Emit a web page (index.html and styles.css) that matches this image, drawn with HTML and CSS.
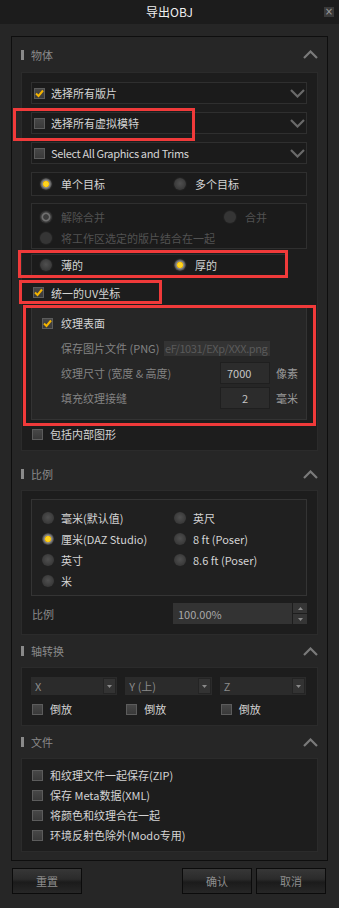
FILE: index.html
```html
<!DOCTYPE html>
<html lang="zh-CN">
<head>
  <meta charset="UTF-8">
  <title>导出OBJ</title>
  <link rel="stylesheet" href="styles.css">
</head>
<body>
  <div class="titlebar">
    <span></span>
    <span class="title">导出OBJ</span>
    <button class="close" title="关闭">×</button>
  </div>

  <div class="frame">
    <!-- 物体 -->
    <div class="sec sec-object">
      <div class="sec-head">
        <i class="bar"></i><span>物体</span>
        <svg class="chev" width="15" height="9" viewBox="0 0 15 9"><polyline points="1,8 7.5,1.5 14,8"/></svg>
      </div>
      <div class="sec-body">
        <div class="box drop">
          <span class="cb"><svg width="9" height="9" viewBox="0 0 9 9"><polyline points="1,4.5 3.5,7 8,1.5"/></svg></span>
          <span class="lbl">选择所有版片</span>
          <svg class="chev" width="15" height="9" viewBox="0 0 15 9"><polyline points="1,1 7.5,7.5 14,1"/></svg>
        </div>
        <div class="box drop">
          <span class="cb"></span>
          <span class="lbl">选择所有虚拟模特</span>
          <svg class="chev" width="15" height="9" viewBox="0 0 15 9"><polyline points="1,1 7.5,7.5 14,1"/></svg>
        </div>
        <div class="box drop">
          <span class="cb"></span>
          <span class="lbl latin">Select All Graphics and Trims</span>
          <svg class="chev" width="15" height="9" viewBox="0 0 15 9"><polyline points="1,1 7.5,7.5 14,1"/></svg>
        </div>

        <div class="box pair target">
          <label class="opt"><span class="rb on"></span>单个目标</label>
          <label class="opt"><span class="rb"></span>多个目标</label>
        </div>

        <div class="box merge">
          <label class="opt"><span class="rb dis on"></span>解除合并</label>
          <label class="opt"><span class="rb dis"></span>合并</label>
          <label class="opt wide"><span class="rb dis"></span>将工作区选定的版片结合在一起</label>
        </div>

        <div class="box pair thick">
          <label class="opt"><span class="rb"></span>薄的</label>
          <label class="opt"><span class="rb on"></span>厚的</label>
        </div>

        <div class="plain uv">
          <span class="cb"><svg width="9" height="9" viewBox="0 0 9 9"><polyline points="1,4.5 3.5,7 8,1.5"/></svg></span>
          <span>统一的UV坐标</span>
        </div>

        <div class="tex">
          <div class="tex-line first">
            <span class="cb"><svg width="9" height="9" viewBox="0 0 9 9"><polyline points="1,4.5 3.5,7 8,1.5"/></svg></span>
            <span>纹理表面</span>
          </div>
          <div class="tex-line sub">
            <span>保存图片文件 (PNG)</span>
            <div class="path">eF/1031/EXp/XXX.png</div>
          </div>
          <div class="tex-line sub">
            <span>纹理尺寸 (宽度 &amp; 高度)</span>
            <div class="num">7000</div>
            <span class="unit">像素</span>
          </div>
          <div class="tex-line sub">
            <span>填充纹理接缝</span>
            <div class="num center">2</div>
            <span class="unit">毫米</span>
          </div>
        </div>

        <div class="plain include">
          <span class="cb"></span>
          <span>包括内部图形</span>
        </div>
      </div>
    </div>

    <!-- 比例 -->
    <div class="sec sec-scale">
      <div class="sec-head">
        <i class="bar"></i><span>比例</span>
        <svg class="chev" width="15" height="9" viewBox="0 0 15 9"><polyline points="1,8 7.5,1.5 14,8"/></svg>
      </div>
      <div class="sec-body">
        <div class="box units">
          <label class="opt"><span class="rb"></span>毫米(默认值)</label>
          <label class="opt"><span class="rb"></span>英尺</label>
          <label class="opt"><span class="rb on"></span>厘米(DAZ Studio)</label>
          <label class="opt"><span class="rb"></span>8 ft (Poser)</label>
          <label class="opt"><span class="rb"></span>英寸</label>
          <label class="opt"><span class="rb"></span>8.6 ft (Poser)</label>
          <label class="opt"><span class="rb"></span>米</label>
        </div>
        <div class="scale-row">
          <span class="dim">比例</span>
          <div class="field">100.00%</div>
          <div class="spin">
            <button><svg width="5" height="3" viewBox="0 0 5 3"><polygon points="0,3 2.5,0 5,3"/></svg></button>
            <button><svg width="5" height="3" viewBox="0 0 5 3"><polygon points="0,0 2.5,3 5,0"/></svg></button>
          </div>
        </div>
      </div>
    </div>

    <!-- 轴转换 -->
    <div class="sec">
      <div class="sec-head">
        <i class="bar"></i><span>轴转换</span>
        <svg class="chev" width="15" height="9" viewBox="0 0 15 9"><polyline points="1,8 7.5,1.5 14,8"/></svg>
      </div>
      <div class="sec-body axes">
        <div class="sel"><span>X</span><span class="arr"><svg width="5" height="3" viewBox="0 0 5 3"><polygon points="0,0 2.5,3 5,0"/></svg></span></div>
        <div class="sel"><span>Y (上)</span><span class="arr"><svg width="5" height="3" viewBox="0 0 5 3"><polygon points="0,0 2.5,3 5,0"/></svg></span></div>
        <div class="sel"><span>Z</span><span class="arr"><svg width="5" height="3" viewBox="0 0 5 3"><polygon points="0,0 2.5,3 5,0"/></svg></span></div>
        <div class="flip"><span class="cb"></span><span>倒放</span></div>
        <div class="flip"><span class="cb"></span><span>倒放</span></div>
        <div class="flip"><span class="cb"></span><span>倒放</span></div>
      </div>
    </div>

    <!-- 文件 -->
    <div class="sec">
      <div class="sec-head">
        <i class="bar"></i><span>文件</span>
        <svg class="chev" width="15" height="9" viewBox="0 0 15 9"><polyline points="1,8 7.5,1.5 14,8"/></svg>
      </div>
      <div class="sec-body files">
        <div class="plain"><span class="cb"></span><span>和纹理文件一起保存(ZIP)</span></div>
        <div class="plain"><span class="cb"></span><span>保存 Meta数据(XML)</span></div>
        <div class="plain"><span class="cb"></span><span>将颜色和纹理合在一起</span></div>
        <div class="plain"><span class="cb"></span><span>环境反射色除外(Modo专用)</span></div>
      </div>
    </div>
  </div>

  <div class="actions">
    <button class="btn">重置</button>
    <button class="btn push">确认</button>
    <button class="btn">取消</button>
  </div>

  <!-- red annotation boxes -->
  <div class="mark mark-a"></div>
  <div class="mark mark-b"></div>
  <div class="mark mark-c"></div>
  <div class="mark mark-d"></div>
</body>
</html>
```

FILE: styles.css
```css
* {
  box-sizing: border-box;
}
body {
  margin: 0;
  width: 339px;
  height: 908px;
  background: #262626;
  font-family: "Noto Sans CJK SC", "Noto Sans", sans-serif;
  font-size: 11px;
  line-height: 14px;
  color: #d4d4d4;
  position: relative;
  overflow: hidden;
}
button {
  font: inherit;
  padding: 0;
  cursor: pointer;
}

/* title bar */
.titlebar {
  height: 24px;
  background: #1c1c1c;
  display: grid;
  grid-template-columns: 1fr auto 1fr;
  align-items: center;
}
.title {
  color: #f0f0f0;
  font-size: 12px;
}
.close {
  justify-self: end;
  margin-right: 5px;
  width: 10px;
  height: 10px;
  border: 0;
  background: #3a3a3a;
  color: #9c9c9c;
  font-family: "DejaVu Sans", sans-serif;
  font-size: 10px;
  line-height: 10px;
}

/* main frame */
.frame {
  margin: 12px 11px 0;
  border: 1px solid #0e0e0e;
  padding: 0 9px 8px 9px;
}
.sec-head {
  height: 32px;
  display: flex;
  align-items: center;
  gap: 7px;
  color: #8a8a8a;
}
.sec-object .sec-head {
  height: 35px;
}
.sec-scale {
  margin-top: 7px;
}
.bar {
  width: 3px;
  height: 10px;
  background: #8a8a8a;
}
.chev {
  fill: none;
  stroke-width: 2.2;
  flex: none;
}
.sec-head .chev {
  margin-left: auto;
  stroke: #7a7a7a;
}
.sec-body {
  background: #1d1d1d;
  border: 1px solid #2b2b2b;
}
.sec-object .sec-body {
  padding: 9px 10px 6px 9px;
}

/* boxed rows */
.box {
  background: #1b1b1b;
  border: 1px solid #2f2f2f;
}
.drop {
  height: 22px;
  display: flex;
  align-items: center;
  padding: 0 1px 0 2px;
  margin-bottom: 8px;
}
.drop .lbl {
  margin-left: 6px;
}
.drop .latin {
  letter-spacing: -0.35px;
}
.drop .chev {
  margin-left: auto;
  stroke: #6a6a6a;
}

/* checkbox */
.cb {
  display: block;
  flex: none;
  width: 11px;
  height: 11px;
  border: 1px solid #5c5c5c;
  background: linear-gradient(#474747, #393939);
}
.cb svg {
  display: block;
  overflow: visible;
  fill: none;
  stroke: #f5b400;
  stroke-width: 2;
}

/* radio */
.opt {
  display: flex;
  align-items: center;
  gap: 9px;
}
.rb {
  flex: none;
  width: 12px;
  height: 12px;
  border-radius: 50%;
  background: radial-gradient(circle at 50% 45%, #505050 0, #3c3c3c 60%, #2f2f2f 100%);
  box-shadow: 0 0 0 1px #222;
}
.rb.on {
  background: radial-gradient(circle, #ffd41e 0 2.4px, #e4aa00 3px, #8c8c8c 3.6px, #6c6c6c 4.6px, #3a3a3a 6px);
}
.rb.dis {
  background: #353535;
}
.rb.dis.on {
  background: radial-gradient(circle, #3c3c3c 0 2.4px, #707070 3.2px 4px, #3a3a3a 5px);
}

.pair {
  height: 22px;
  display: grid;
  grid-template-columns: 134px 1fr;
  align-items: center;
  padding-left: 8px;
}
.target {
  height: 24px;
  margin-bottom: 7px;
}
.thick {
  margin-right: 21px;
}
.merge {
  height: 46px;
  padding: 2px 0 0 8px;
  margin-bottom: 5px;
  display: grid;
  grid-template-columns: 184px 1fr;
  grid-auto-rows: 21px;
  align-items: center;
  color: #525252;
}
.merge .wide {
  grid-column: 1 / -1;
}

/* plain check lines */
.plain {
  display: flex;
  align-items: center;
  gap: 7px;
}
.uv {
  height: 23px;
  margin-top: 5px;
  padding-left: 2px;
}
.include {
  height: 20px;
  margin-top: 4px;
  padding-left: 1px;
}

/* texture group */
.tex {
  margin-top: 3px;
  height: 113px;
  background: #262626;
  border: 1px solid #333;
  padding: 4px 8px 0 10px;
  display: flex;
  flex-direction: column;
  gap: 3px;
}
.tex-line {
  height: 22px;
  display: flex;
  align-items: center;
}
.tex-line.first {
  gap: 8px;
}
.tex-line.sub {
  padding-left: 19px;
  color: #838383;
}
.path {
  margin-left: auto;
  margin-right: 28px;
  width: 106px;
  height: 15px;
  background: #333;
  color: #5a5a5a;
  display: flex;
  align-items: center;
  overflow: hidden;
  white-space: nowrap;
  padding-left: 1px;
  letter-spacing: -0.4px;
}
.num {
  margin-left: auto;
  width: 50px;
  height: 22px;
  background: #2c2c2c;
  border: 1px solid #1f1f1f;
  color: #c6c6c6;
  display: flex;
  align-items: center;
  padding-left: 6px;
}
.num.center {
  justify-content: center;
  padding-left: 0;
}
.unit {
  width: 22px;
  margin-left: 6px;
  color: #9a9a9a;
}

/* scale */
.sec-scale .sec-body {
  padding: 8px 10px 10px 9px;
}
.units {
  height: 97px;
  background: #202020;
  border-color: #343434;
  padding: 7px 0 0 10px;
  display: grid;
  grid-template-columns: 132px 1fr;
  grid-auto-rows: 21px;
  align-items: center;
}
.units .opt {
  gap: 7px;
}
.scale-row {
  margin-top: 7px;
  height: 21px;
  display: flex;
  align-items: center;
  padding-left: 1px;
}
.dim {
  color: #8a8a8a;
}
.field {
  margin-left: auto;
  width: 119px;
  height: 21px;
  background: #333;
  color: #a8a8a8;
  padding-left: 5px;
  display: flex;
  align-items: center;
}
.spin {
  width: 14px;
  margin-left: 1px;
  display: flex;
  flex-direction: column;
  gap: 1px;
}
.spin button {
  height: 10px;
  border: 0;
  background: #353535;
  display: flex;
  align-items: center;
  justify-content: center;
}
.spin svg,
.arr svg {
  fill: #8a8a8a;
}

/* axes */
.axes {
  padding: 9px 11px 7px 9px;
  display: grid;
  grid-template-columns: repeat(3, 1fr);
  grid-template-rows: 18px 18px;
  column-gap: 8px;
  row-gap: 5px;
}
.sel {
  height: 18px;
  background: #2b2b2b;
  color: #8a8a8a;
  display: flex;
  align-items: center;
  padding-left: 4px;
}
.arr {
  margin-left: auto;
  margin-right: 1px;
  width: 13px;
  height: 16px;
  background: #333;
  border: 1px solid #242424;
  display: flex;
  align-items: center;
  justify-content: center;
}
.flip {
  display: flex;
  align-items: center;
  gap: 7px;
  padding-left: 1px;
}

/* files */
.files {
  padding: 6px 10px 6px 10px;
}
.files .plain {
  height: 20px;
}

/* bottom buttons */
.actions {
  display: flex;
  gap: 4px;
  margin-top: 7px;
  padding: 0 13px 0 12px;
}
.btn {
  width: 70px;
  height: 26px;
  border: 1px solid #0b0b0b;
  background: linear-gradient(#373737 0%, #2b2b2b 42%, #1b1b1b 55%, #272727 100%);
  color: #8e8e8e;
}
.push {
  margin-left: auto;
}

/* annotation marks */
.mark {
  position: absolute;
  border: 3px solid #f03a3a;
  pointer-events: none;
}
.mark-a {
  left: 13px;
  top: 108px;
  width: 182px;
  height: 33px;
}
.mark-b {
  left: 18px;
  top: 250px;
  width: 270px;
  height: 28px;
}
.mark-c {
  left: 19px;
  top: 280px;
  width: 143px;
  height: 24px;
}
.mark-d {
  left: 23px;
  top: 305px;
  width: 293px;
  height: 121px;
}
```
